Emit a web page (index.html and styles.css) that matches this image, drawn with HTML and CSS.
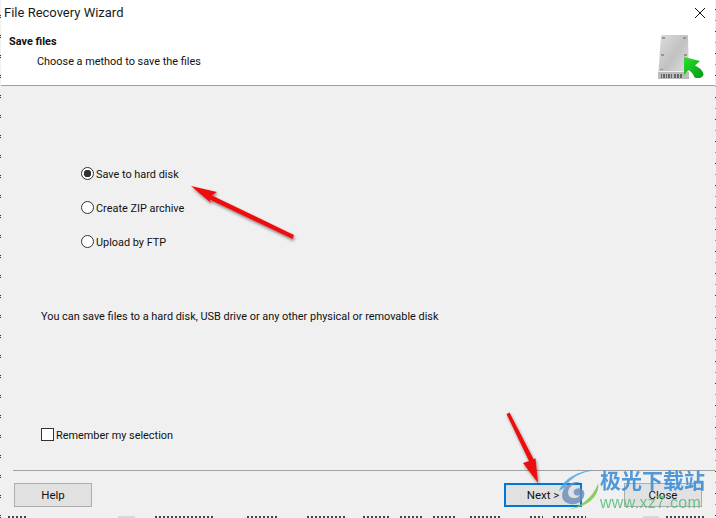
FILE: index.html
```html
<!DOCTYPE html>
<html lang="en">
  <head>
    <meta charset="UTF-8">
    <title>File Recovery Wizard</title>
    <link rel="stylesheet" href="styles.css">
  </head>
  <body>
    <div class="window">
      <div class="titlebar">
        <span class="title">File Recovery Wizard</span>
        <svg class="close-x" width="12" height="12" viewBox="0 0 12 12">
          <path d="M1 1L11 11M11 1L1 11" stroke="#111" stroke-width="1" fill="none"/>
        </svg>
      </div>
      <div class="header">
        <div class="header-text">
          <div class="header-title">Save files</div>
          <div class="header-sub">Choose a method to save the files</div>
        </div>
        <svg class="disk-icon" width="48" height="48" viewBox="0 0 48 48">
          <defs>
            <linearGradient id="diskTop" x1="0" y1="0" x2="1" y2="1">
              <stop offset="0" stop-color="#dcdcdc"/>
              <stop offset="0.5" stop-color="#c2c2c2"/>
              <stop offset="1" stop-color="#e6e6e6"/>
            </linearGradient>
            <linearGradient id="arrowGreen" x1="0" y1="0" x2="1" y2="1">
              <stop offset="0" stop-color="#2fe02f"/>
              <stop offset="1" stop-color="#009a10"/>
            </linearGradient>
          </defs>
          <path d="M5 1H32L33 45H2Z" fill="url(#diskTop)"/>
          <rect x="2" y="38" width="31" height="7" fill="#bcbcbc"/>
          <rect x="3" y="37" width="29" height="1" fill="#eeeeee"/>
          <path d="M5 40h1v4h-1zM7 40h2v4h-2zM10 40h1v4h-1zM12 40h2v4h-2zM15 40h1v4h-1zM18 40h2v4h-2zM21 40h2v4h-2zM24 40h2v4h-2z" fill="#666"/>
          <g fill="#969696">
            <rect x="6" y="3" width="3" height="2"/>
            <rect x="27" y="3" width="3" height="2"/>
            <rect x="5" y="20" width="3" height="2"/>
            <rect x="28" y="20" width="3" height="2"/>
            <rect x="4" y="35" width="3" height="1"/>
          </g>
          <path d="M28 23L44 27L39 31.500C44 34 47.500 37 47.500 41C45.500 44.500 42 44.500 38.500 43.500C37 39.500 35 37.500 32.500 36L28 41Z" fill="url(#arrowGreen)"/>
        </svg>
      </div>
      <div class="content">
        <div class="options">
          <label class="option"><input type="radio" name="method" checked>Save to hard disk</label>
          <label class="option"><input type="radio" name="method">Create ZIP archive</label>
          <label class="option"><input type="radio" name="method">Upload by FTP</label>
        </div>
        <p class="hint">You can save files to a hard disk, USB drive or any other physical or removable disk</p>
        <label class="remember"><input type="checkbox">Remember my selection</label>
      </div>
      <div class="footer">
        <button class="btn">Help</button>
        <div class="footer-right">
          <button class="btn btn-focus">Next &gt;</button>
          <button class="btn">Close</button>
        </div>
      </div>
    </div>
    <svg class="fringe" width="716" height="2" viewBox="0 0 716 2">
      <g stroke="#444" stroke-width="2" stroke-dasharray="2 2" fill="none">
        <path d="M8 1H28M155 1H213M247 1H277M307 1H347M363 1H389M400 1H423M433 1H456M470 1H500M530 1H543M553 1H586M666 1H706"/>
      </g>
      <path d="M118 0h17v2h-17zM643 0h16v2h-16z" fill="#d8d8d8"/>
    </svg>

    <!-- red arrows drawn over the dialog -->
    <svg class="overlay" width="716" height="518" viewBox="0 0 716 518">
      <defs>
        <filter id="soft" x="-20%" y="-20%" width="140%" height="140%">
          <feDropShadow dx="1" dy="2" stdDeviation="1.500" flood-color="#000" flood-opacity="0.45"/>
        </filter>
      </defs>
      <g fill="#ee1111" filter="url(#soft)">
        <path d="M191 186L217 192L212 195.500L294 235L292.500 239L209.500 199.500L211 203Z"/>
        <path d="M538 483L523 463L529 461L506.500 414L509.500 412.500L533.500 459L535.500 458.500Z"/>
      </g>
    </svg>

    <!-- watermark -->
    <div class="watermark">
      <svg class="wm-logo" width="43" height="44" viewBox="0 0 46 46">
        <path d="M2 24C8 10 24 2 40 2C26 4 14 10 9 20Z" fill="#4aa3e0" opacity="0.8"/>
        <path d="M10 44C24 42 38 32 44 16C46 28 34 42 10 44Z" fill="#7cc34a" opacity="0.85"/>
        <path d="M6 32C3 20 16 12 26 15C18 15 11 20 12 27C13 33 22 33 25 28C22 30 17 29 18 24C20 20 27 20 29 25C31 33 22 40 14 38C10 37 7 35 6 32Z" fill="#6f8fb8" opacity="0.85"/>
      </svg>
      <div class="wm-text">
        <span class="wm-cn">极光下载站</span>
        <span class="wm-url">www.xz7.com</span>
      </div>
    </div>
  </body>
</html>
```

FILE: styles.css
```css
* { box-sizing: border-box; margin: 0; padding: 0; }
html, body {
  width: 716px;
  height: 518px;
  overflow: hidden;
}
body {
  position: relative;
  padding: 0 1px;
  font-family: Roboto, "Noto Sans", sans-serif;
  font-size: 10.9px;
  color: #111;
  background-color: #f0f0f0;
  /* bits of the desktop showing on both sides of the dialog */
  background-image:
    repeating-linear-gradient(to bottom, #333 0 1px, transparent 1px 2px, #333 2px 3px, transparent 3px 20px),
    repeating-linear-gradient(to bottom, #333 0 1px, transparent 1px 11px, #c98a4a 11px 12px, transparent 12px 22px);
  background-size: 1px 100%, 1px 100%;
  background-position: 0 15px, 715px 9px;
  background-repeat: no-repeat;
}
.window {
  display: flex;
  flex-direction: column;
  height: 516px;
  background: #f0f0f0;
}
.titlebar {
  display: flex;
  justify-content: space-between;
  align-items: center;
  height: 25px;
  padding: 0 9px 0 3px;
  background: #fff;
}
.title {
  font-size: 13px;
  color: #1a1a1a;
}
.close-x {
  margin-top: 1px;
}
.header {
  display: flex;
  justify-content: space-between;
  height: 61px;
  padding: 10px 11px 0 8px;
  background: #fff;
  border-bottom: 1px solid #a0a0a0;
}
.header-title {
  font-weight: 700;
  line-height: 14px;
}
.header-sub {
  margin-top: 6px;
  padding-left: 28px;
  line-height: 14px;
}
.disk-icon {
  margin-top: -1px;
}
.content {
  flex: 1;
  display: flex;
  flex-direction: column;
  padding-left: 40px;
}
.options {
  display: flex;
  flex-direction: column;
  gap: 18px;
  margin-top: 80px;
  padding-left: 40px;
}
.option, .remember {
  display: flex;
  align-items: center;
  gap: 2px;
  height: 16px;
  padding-top: 2px;
  line-height: 14px;
}
input[type="radio"], input[type="checkbox"] {
  appearance: none;
  width: 13px;
  height: 13px;
  margin-top: -4px;
  background: #fff;
  border: 1px solid #333;
  flex: none;
}
input[type="radio"] {
  border-radius: 50%;
}
input[type="radio"]:checked {
  background: radial-gradient(circle, #333 0 3.500px, #fff 4px);
}
.hint {
  margin-top: 60px;
  line-height: 14px;
}
.remember {
  margin-top: 103px;
}
.footer {
  display: flex;
  justify-content: space-between;
  height: 46px;
  margin-left: 12px;
  padding: 12px 13px 0 1px;
  border-top: 1px solid #a0a0a0;
}
.footer-right {
  display: flex;
  gap: 42px;
}
.btn {
  width: 78px;
  height: 24px;
  font-family: inherit;
  font-size: 11.5px;
  color: #111;
  background: #e1e1e1;
  border: 1px solid #adadad;
}
.btn-focus {
  border: 2px solid #0078d7;
}
.fringe {
  display: block;
  margin-left: -1px;
}
.overlay {
  position: absolute;
  top: 0;
  left: 0;
  pointer-events: none;
}
.watermark {
  position: absolute;
  top: 468px;
  left: 557px;
  display: flex;
}
.wm-logo {
  flex: none;
}
.wm-text {
  display: flex;
  flex-direction: column;
  align-items: flex-start;
}
.wm-cn {
  font-family: "Noto Sans CJK SC", sans-serif;
  font-weight: 700;
  font-size: 21px;
  line-height: 22px;
  color: #3f8fd6;
  opacity: 0.9;
}
.wm-url {
  margin-top: 6px;
  font-family: "Liberation Sans", sans-serif;
  font-size: 16px;
  line-height: 14px;
  letter-spacing: 0.3px;
  color: #5cc07f;
  opacity: 0.9;
}
```
